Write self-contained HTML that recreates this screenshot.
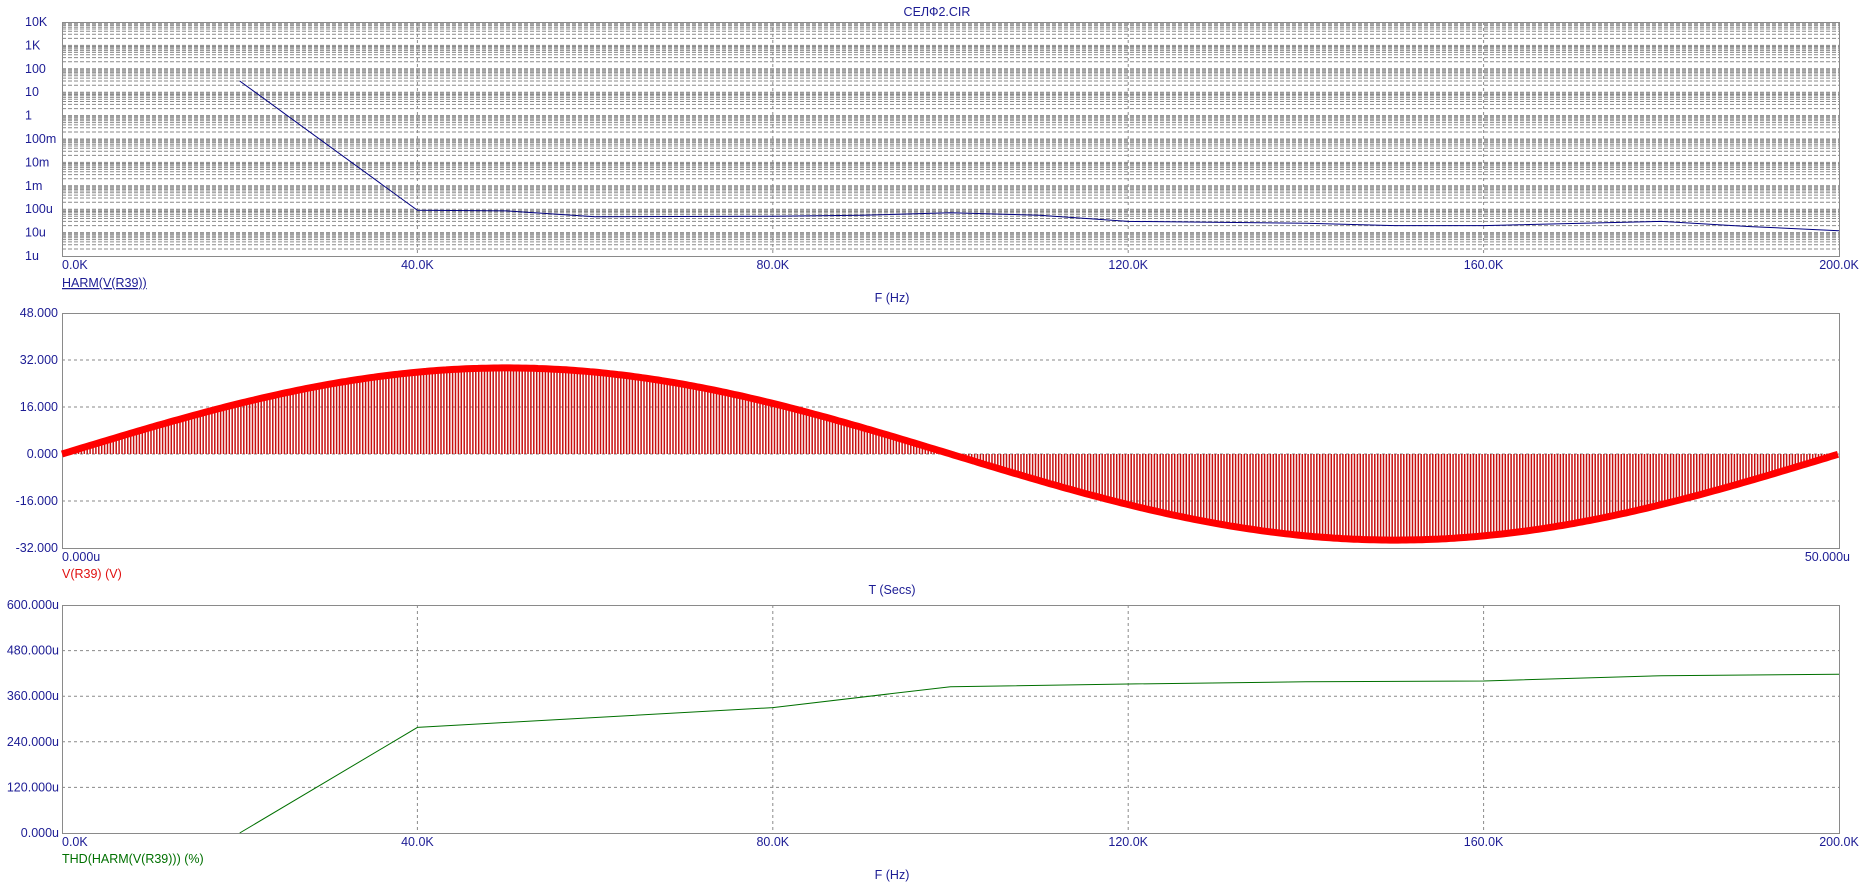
<!DOCTYPE html>
<html><head><meta charset="utf-8"><style>
html,body{margin:0;padding:0;background:#fff;width:1874px;height:895px;overflow:hidden}
svg{display:block}
text{font-family:"Liberation Sans",Arial,sans-serif;font-size:12.5px}
</style></head><body>
<svg id="s" width="1874" height="895" xmlns="http://www.w3.org/2000/svg"></svg>
<script>
const S=document.getElementById('s');let h='';
const L=62,R=1839,W=R-L;
const blue='#1c1c94',grid='#8a8a8a';
function t(x,y,s,c,a,extra){h+=`<text x="${x}" y="${y}" fill="${c||blue}" text-anchor="${a||'start'}" ${extra||''}>${s}</text>`;}
function hl(y,da){h+=`<line x1="${L}" y1="${y}" x2="${R}" y2="${y}" stroke="${grid}" stroke-dasharray="${da||'3,3'}" stroke-width="1"/>`;}
function vl(x,y1,y2){h+=`<line x1="${x}" y1="${y1}" x2="${x}" y2="${y2}" stroke="${grid}" stroke-dasharray="3,3" stroke-width="1"/>`;}
function xf(k){return L+W*k/200;}
t(937,16,'СЕЛФ2.CIR',blue,'middle');
const T1=22,B1=256,D=(B1-T1)/10;
for(let d=0;d<10;d++){for(let m=1;m<10;m++){const y=B1-(d+Math.log10(m))*D;if(m==1&&d==0)continue;hl(y.toFixed(1),'4,2');}}
for(let k=40;k<200;k+=40)vl(xf(k).toFixed(1),T1,B1);
h+=`<rect x="${L}.5" y="${T1}.5" width="${W}" height="${B1-T1}" fill="none" stroke="${grid}"/>`;
const yl=['10K','1K','100','10','1','100m','10m','1m','100u','10u','1u'];
yl.forEach((s,i)=>t(25,T1+i*D+4,s));
function ly(v){return B1-(Math.log10(v)+6)*D;}
const c1=[[20,30],[40,90e-6],[50,85e-6],[60,48e-6],[80,50e-6],[90,55e-6],[100,70e-6],[110,55e-6],[120,30e-6],[140,25e-6],[150,20e-6],[160,20e-6],[180,30e-6],[190,18e-6],[200,12e-6]];
h+=`<polyline fill="none" stroke="#000080" stroke-width="1" points="${c1.map(p=>xf(p[0]).toFixed(1)+','+ly(p[1]).toFixed(1)).join(' ')}"/>`;
['0.0K','40.0K','80.0K','120.0K','160.0K','200.0K'].forEach((s,i)=>t(i==0?L:xf(i*40),269,s,blue,i==0?'start':'middle'));
t(L,287,'HARM(V(R39))',blue,'start','text-decoration="underline"');
t(892,302,'F (Hz)',blue,'middle');
const T2=313,B2=548;function y2(v){return T2+(48-v)*(B2-T2)/80;}
[32,16,0,-16].forEach(v=>hl(y2(v)));
h+=`<rect x="${L}.5" y="${T2}.5" width="${W}" height="${B2-T2}" fill="none" stroke="${grid}"/>`;
[48,32,16,0,-16,-32].forEach(v=>t(58,y2(v)+4,(v).toFixed(3),blue,'end'));
let hatch='';for(let x=L+2;x<R;x+=2.9){const v=29.5*Math.sin(2*Math.PI*(x-L)/W);hatch+=`M${x.toFixed(1)},${y2(0)}V${y2(v).toFixed(1)}`;}
h+=`<path d="${hatch}" stroke="#c81010" stroke-width="1.5" fill="none"/>`;
let pts=[];for(let x=L;x<=R;x+=4){pts.push(x+','+y2(29.3*Math.sin(2*Math.PI*(x-L)/W)).toFixed(1));}
h+=`<polyline fill="none" stroke="#ff0000" stroke-width="7" points="${pts.join(' ')}"/>`;
t(L,561,'0.000u');t(1850,561,'50.000u',blue,'end');
t(L,578,'V(R39) (V)','#e01010');
t(892,594,'T (Secs)',blue,'middle');
const T3=605,B3=833;function y3(v){return B3-v*(B3-T3)/600;}
[480,360,240,120].forEach(v=>hl(y3(v)));
for(let k=40;k<200;k+=40)vl(xf(k).toFixed(1),T3,B3);
h+=`<rect x="${L}.5" y="${T3}.5" width="${W}" height="${B3-T3}" fill="none" stroke="${grid}"/>`;
[600,480,360,240,120,0].forEach(v=>t(59,y3(v)+4,v.toFixed(3)+'u',blue,'end'));
const c3=[[20,0],[40,278],[80,330],[100,385],[120,392],[140,398],[160,400],[180,414],[200,418]];
h+=`<polyline fill="none" stroke="#007000" stroke-width="1" points="${c3.map(p=>xf(p[0]).toFixed(1)+','+y3(p[1]).toFixed(1)).join(' ')}"/>`;
['0.0K','40.0K','80.0K','120.0K','160.0K','200.0K'].forEach((s,i)=>t(i==0?L:xf(i*40),846,s,blue,i==0?'start':'middle'));
t(L,863,'THD(HARM(V(R39))) (%)','#007000');
t(892,879,'F (Hz)',blue,'middle');
S.innerHTML=h;
</script>
</body></html>
